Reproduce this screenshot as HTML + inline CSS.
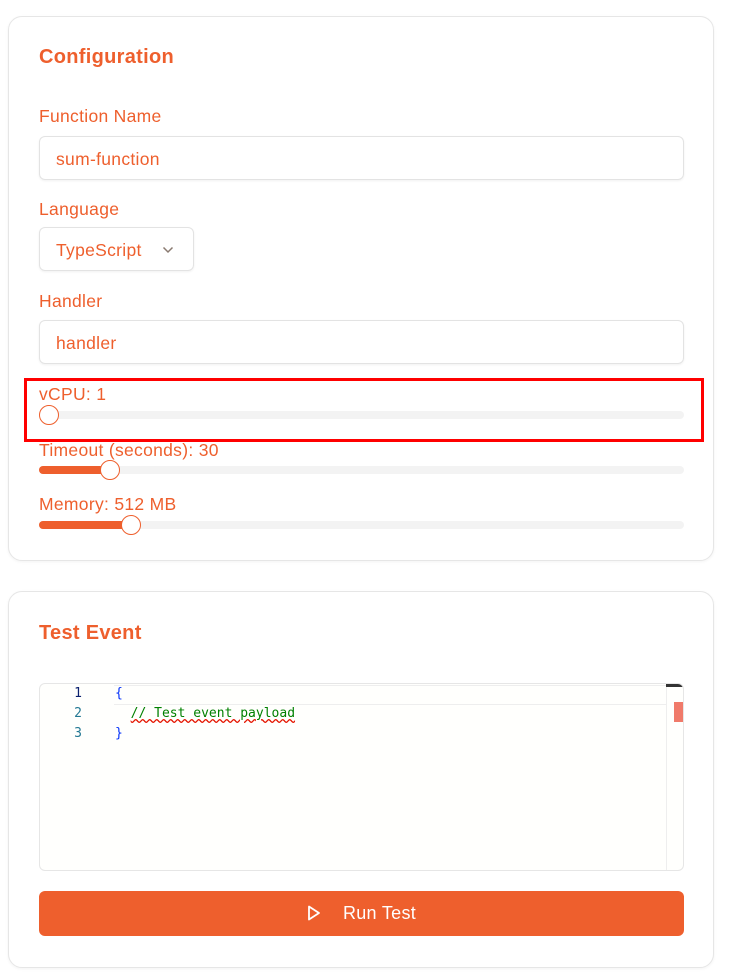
<!DOCTYPE html>
<html><head><style>
body{margin:0;background:#fff;font-family:"Liberation Sans",sans-serif;color:#ee5f2d;}
.card{position:absolute;left:8px;width:704px;border:1px solid #e6e6e6;border-radius:14px;background:#fff;box-shadow:0 1px 3px rgba(0,0,0,.05);}
.t{position:absolute;left:39px;font-size:20px;font-weight:bold;letter-spacing:0.3px}
.l{position:absolute;left:39px;font-size:17.5px;letter-spacing:0.3px}
.in{position:absolute;left:39px;width:645px;height:44px;border:1px solid #e3e3e3;border-radius:6px;box-shadow:0 1px 2px rgba(0,0,0,.06);font-size:17.5px;letter-spacing:0.3px;line-height:44px;padding-left:16px;box-sizing:border-box;}
.tr{position:absolute;left:39px;width:645px;height:8px;border-radius:4px;background:#f3f3f3;}
.fill{position:absolute;left:39px;height:8px;border-radius:4px;background:#ee5f2d;}
.th{position:absolute;width:18px;height:18px;border:1.5px solid #ee5f2d;border-radius:50%;background:#fff;}
</style></head><body>
<div class="card" style="top:16px;height:543px"></div>
<div class="card" style="top:591px;height:375px"></div>
<div class="t" style="top:46px">Configuration</div>
<div class="l" style="top:106px">Function Name</div>
<div class="in" style="top:136px">sum-function</div>
<div class="l" style="top:199px">Language</div>
<div class="in" style="top:227px;width:155px">TypeScript <svg width="12" height="8" viewBox="0 0 12 8" style="position:absolute;left:122px;top:18px"><path d="M1.5 1.5 L6 6 L10.5 1.5" fill="none" stroke="#8a7a70" stroke-width="1.5"/></svg></div>
<div class="l" style="top:291px">Handler</div>
<div class="in" style="top:320px">handler</div>
<div class="l" style="top:384px">vCPU: 1</div>
<div class="tr" style="top:411px"></div>
<div class="th" style="left:39px;top:405px"></div>
<div style="position:absolute;left:24px;top:378px;width:674px;height:58px;border:3px solid #f00"></div>
<div class="l" style="top:440px">Timeout (seconds): 30</div>
<div class="tr" style="top:466px"></div>
<div class="fill" style="top:466px;width:70px"></div>
<div class="th" style="left:100px;top:460px"></div>
<div class="l" style="top:494px">Memory: 512 MB</div>
<div class="tr" style="top:521px"></div>
<div class="fill" style="top:521px;width:92px"></div>
<div class="th" style="left:121px;top:515px"></div>
<div class="t" style="top:622px">Test Event</div>
<div style="position:absolute;left:39px;top:683px;width:643px;height:186px;border:1px solid #e6e6e6;border-radius:6px;background:#fffffd;overflow:hidden;font-family:'DejaVu Sans Mono',monospace;font-size:13px">
 <div style="position:absolute;left:74px;top:1px;width:552px;height:18px;border:1px solid #eee;border-left:0"></div>
 <div style="position:absolute;left:626px;top:0;width:1px;height:186px;background:#eee"></div>
 <div style="position:absolute;left:626px;top:0;width:17px;height:3px;background:#333"></div>
 <div style="position:absolute;left:634px;top:18px;width:9px;height:20px;background:#f07a6a"></div>
 <div style="position:absolute;left:30px;top:0px;line-height:20px;color:#237893;text-align:right;width:12px">
  <div style="color:#0b216f">1</div><div>2</div><div>3</div></div>
 <div style="position:absolute;left:75px;top:0px;line-height:20px;white-space:pre"><span style="color:#0431fa">{</span>
  <span style="color:#008000;text-decoration:underline wavy #e51400">// Test event payload</span>
<span style="color:#0431fa">}</span></div>
</div>
<div style="position:absolute;left:39px;top:891px;width:645px;height:45px;border-radius:6px;background:#ee5f2d;color:#fff;font-size:18px;letter-spacing:0.3px;line-height:45px;text-align:center">
<svg width="14" height="16" viewBox="0 0 14 16" style="vertical-align:-2px;margin-right:22px"><path d="M2 1.5 L12 8 L2 14.5 Z" fill="none" stroke="#fff" stroke-width="1.8" stroke-linejoin="round"/></svg>Run Test</div>
</body></html>
